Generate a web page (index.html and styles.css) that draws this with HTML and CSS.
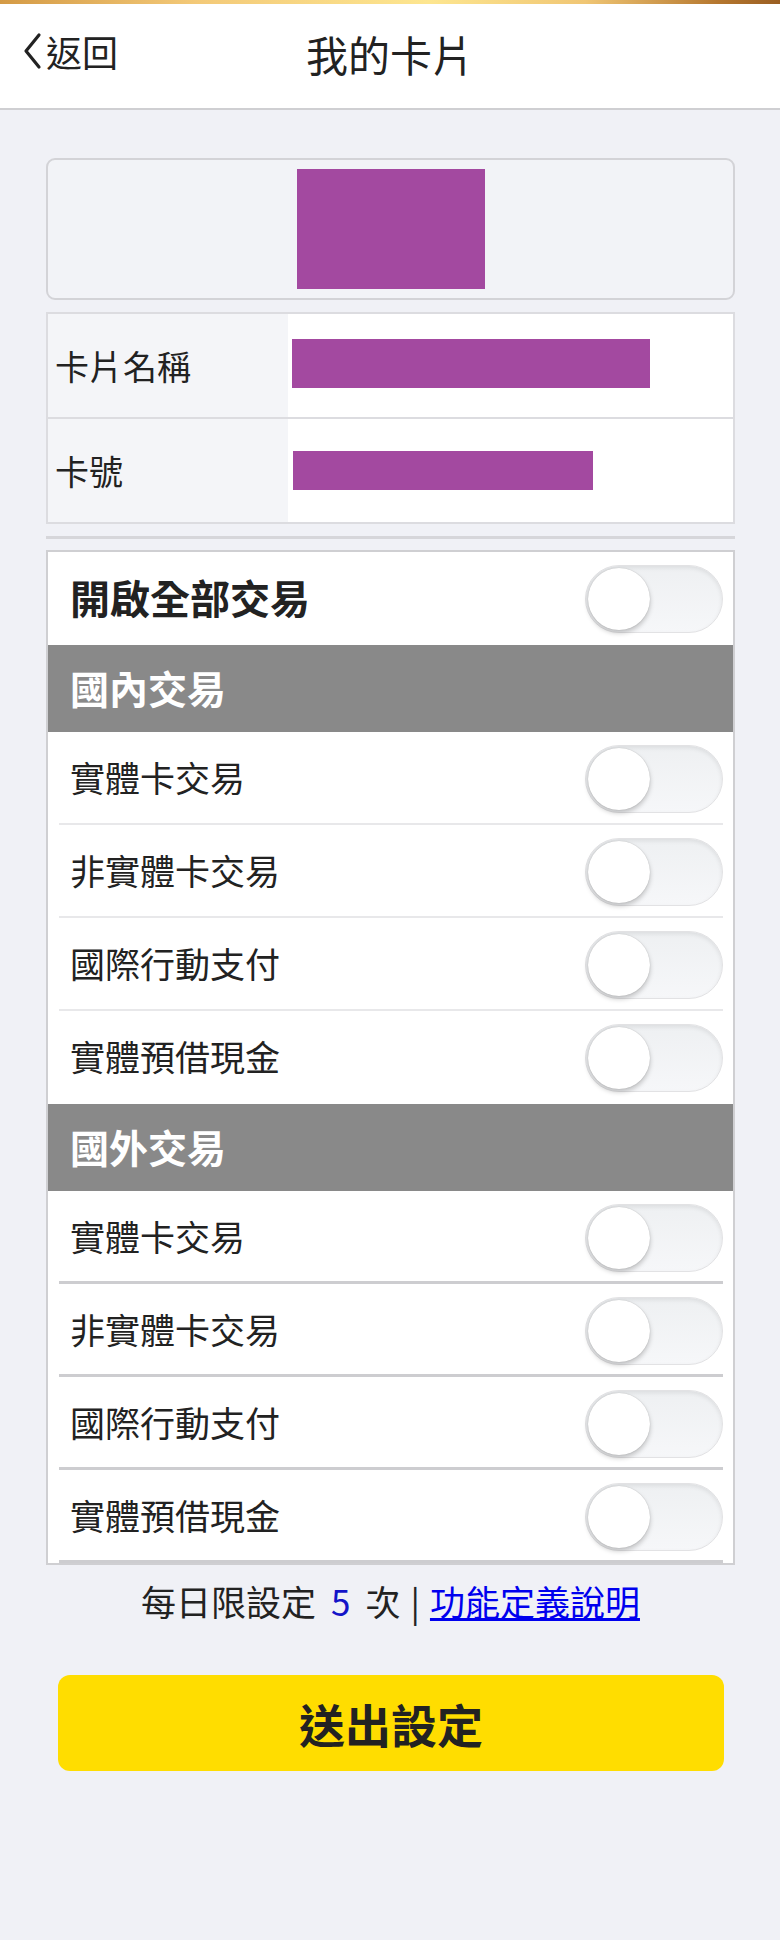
FILE: index.html
```html
<!DOCTYPE html>
<html lang="zh-Hant">
<head>
<meta charset="utf-8">
<title>我的卡片</title>
<link rel="stylesheet" href="styles.css">
</head>
<body>
<div class="goldbar"></div>
<header class="topbar">
  <a class="back">
    <svg class="chev" width="22" height="38" viewBox="0 0 22 38"><polyline points="18,3 5,19 18,35" fill="none" stroke="#222" stroke-width="3.2" stroke-linecap="round" stroke-linejoin="round"/></svg>
    <span>返回</span>
  </a>
  <h1 class="title">我的卡片</h1>
</header>

<main class="content">
  <div class="cardbox"><div class="cardimg"></div></div>

  <div class="info">
    <div class="inforow">
      <div class="label">卡片名稱</div>
      <div class="value"><div class="mask mask-name"></div></div>
    </div>
    <div class="inforow">
      <div class="label">卡號</div>
      <div class="value"><div class="mask mask-no"></div></div>
    </div>
  </div>

  <div class="sep"></div>

  <section class="panel">
    <div class="row master"><span>開啟全部交易</span><span class="toggle"><span class="knob"></span></span></div>
    <div class="sechead">國內交易</div>
    <div class="row dom"><span>實體卡交易</span><span class="toggle"><span class="knob"></span></span></div>
    <div class="row dom"><span>非實體卡交易</span><span class="toggle"><span class="knob"></span></span></div>
    <div class="row dom"><span>國際行動支付</span><span class="toggle"><span class="knob"></span></span></div>
    <div class="row dom last"><span>實體預借現金</span><span class="toggle"><span class="knob"></span></span></div>
    <div class="sechead">國外交易</div>
    <div class="row frn"><span>實體卡交易</span><span class="toggle"><span class="knob"></span></span></div>
    <div class="row frn"><span>非實體卡交易</span><span class="toggle"><span class="knob"></span></span></div>
    <div class="row frn"><span>國際行動支付</span><span class="toggle"><span class="knob"></span></span></div>
    <div class="row frn"><span>實體預借現金</span><span class="toggle"><span class="knob"></span></span></div>
  </section>

  <p class="note">每日限設定<span class="num">5</span>次<span class="bar">|</span><a class="link">功能定義說明</a></p>

  <button class="submit">送出設定</button>
</main>
</body>
</html>
```

FILE: styles.css
```css
html, body {
  margin: 0;
  padding: 0;
}
body {
  background: #f0f1f6;
  font-family: "Noto Sans CJK TC", "Noto Sans CJK SC", "Noto Sans", sans-serif;
  color: #222;
  min-height: 1940px;
}
.goldbar {
  height: 4px;
  background: linear-gradient(90deg, #d49a45 0%, #f3c978 25%, #fde690 55%, #f0c674 75%, #b5772f 92%, #9a5e22 100%);
}
.topbar {
  height: 104px;
  background: #fff;
  border-bottom: 2px solid #cfcfd2;
  display: flex;
  align-items: center;
  justify-content: center;
  position: relative;
}
.back {
  position: absolute;
  left: 21px;
  top: 24px;
  display: flex;
  align-items: center;
  gap: 3px;
  font-size: 36px;
  line-height: 46px;
  color: #222;
}
.chev { display: block; }
.title {
  margin: 0 0 4px;
  font-size: 42px;
  font-weight: 400;
  line-height: 50px;
  color: #222;
}
.content {
  padding: 48px 45px 0 46px;
  display: flex;
  flex-direction: column;
}
.cardbox {
  border: 2px solid #d3d3d7;
  border-radius: 9px;
  background: #f2f3f7;
  padding: 9px 0;
  display: flex;
  justify-content: center;
}
.cardimg {
  width: 188px;
  height: 120px;
  background: #a349a0;
}
.info {
  margin-top: 12px;
  border: 2px solid #dcdce0;
  background: #fff;
}
.inforow {
  display: flex;
  height: 103px;
}
.inforow + .inforow {
  border-top: 2px solid #dcdce0;
}
.label {
  width: 240px;
  background: #f4f5f8;
  display: flex;
  align-items: center;
  padding-left: 7px;
  box-sizing: border-box;
  font-size: 34px;
  color: #222;
}
.value {
  flex: 1;
  display: flex;
  align-items: center;
  padding-left: 4px;
}
.mask { background: #a349a0; }
.mask-name { width: 358px; height: 49px; margin-top: -4px; }
.mask-no { width: 300px; height: 39px; margin-left: 1px; }
.sep {
  margin-top: 12px;
  height: 3px;
  background: #d6d6da;
}
.panel {
  margin-top: 11px;
  border: 2px solid #cfcfd2;
  background: #fff;
}
.row {
  height: 93px;
  box-sizing: border-box;
  display: flex;
  align-items: center;
  justify-content: space-between;
  padding: 0 10px 4px 22px;
  font-size: 35px;
  color: #222;
  position: relative;
}
.row.master {
  font-size: 40px;
  font-weight: 700;
}
.row .toggle { margin-top: 4px; }
.row.dom:not(.last)::after,
.row.frn::after {
  content: "";
  position: absolute;
  left: 11px;
  right: 10px;
  bottom: 0;
  height: 2px;
  background: #e8e8ea;
}
.row.frn::after {
  background: #cdcdd0;
  height: 3px;
}
.sechead {
  height: 87px;
  box-sizing: border-box;
  background: #898989;
  color: #fff;
  font-size: 39px;
  font-weight: 700;
  display: flex;
  align-items: center;
  padding: 0 0 4px 22px;
}
.toggle {
  width: 138px;
  height: 68px;
  box-sizing: border-box;
  border-radius: 34px;
  background: linear-gradient(180deg, #eef0f2 0%, #f6f7f9 100%);
  border: 1px solid #e2e2e4;
  box-shadow: inset 0 2px 4px rgba(0,0,0,0.08);
  display: flex;
  align-items: center;
  padding-left: 2px;
}
.knob {
  width: 62px;
  height: 62px;
  border-radius: 50%;
  background: #fff;
  box-shadow: 0 3px 5px rgba(0,0,0,0.22), 0 0 1px rgba(0,0,0,0.25);
}
.note {
  margin: 12px 0 0;
  text-align: center;
  font-size: 35px;
  line-height: 48px;
  color: #222;
}
.num {
  color: #1414c8;
  margin: 0 15px;
}
.bar { margin: 0 10px; }
.link {
  color: #0000ee;
  text-decoration: underline;
}
.submit {
  margin: 50px 11px 0 12px;
  height: 96px;
  border: none;
  border-radius: 12px;
  background: #ffdd00;
  font-family: inherit;
  font-size: 46px;
  font-weight: 700;
  color: #222;
}
```
